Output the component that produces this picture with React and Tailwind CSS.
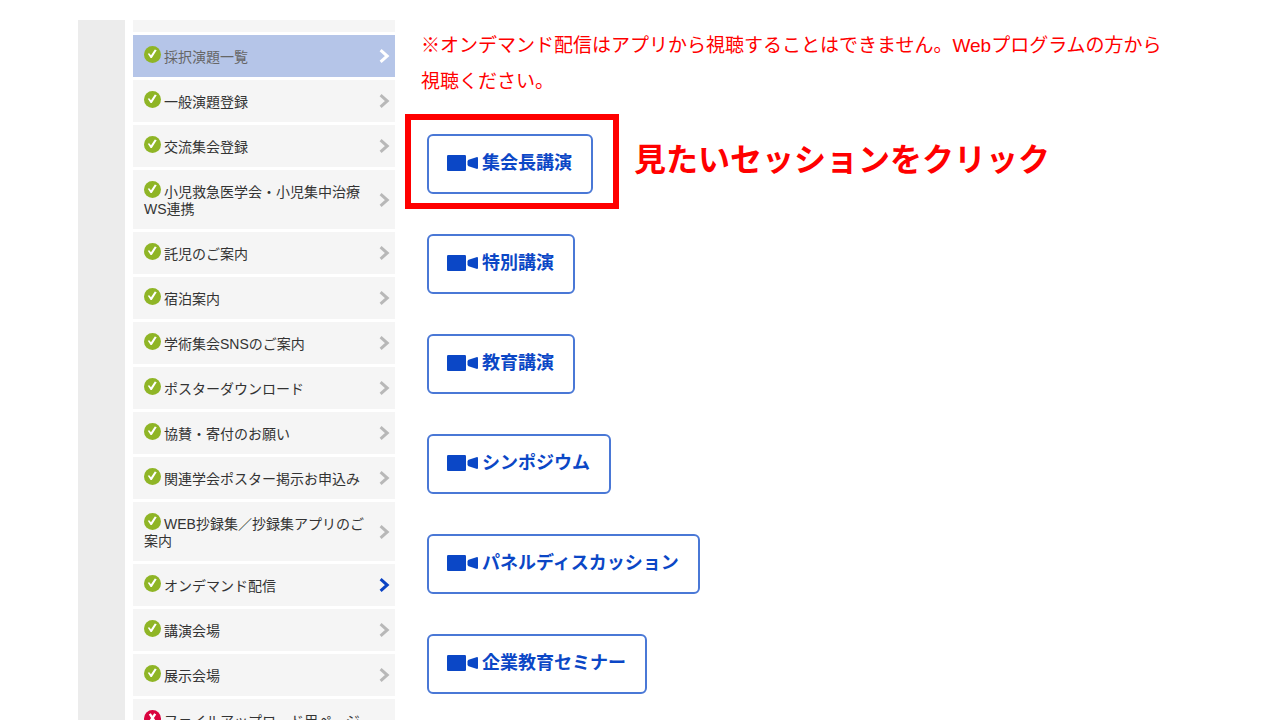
import clsx from 'clsx'

const menuItems = [
  { label: '採択演題一覧', state: 'hover' },
  { label: '一般演題登録' },
  { label: '交流集会登録' },
  { label: '小児救急医学会・小児集中治療WS連携' },
  { label: '託児のご案内' },
  { label: '宿泊案内' },
  { label: '学術集会SNSのご案内' },
  { label: 'ポスターダウンロード' },
  { label: '協賛・寄付のお願い' },
  { label: '関連学会ポスター掲示お申込み' },
  { label: 'WEB抄録集／抄録集アプリのご案内' },
  { label: 'オンデマンド配信', state: 'current' },
  { label: '講演会場' },
  { label: '展示会場' },
  { label: 'ファイルアップロード用ページ', closed: true },
]

const sessions = [
  '集会長講演',
  '特別講演',
  '教育講演',
  'シンポジウム',
  'パネルディスカッション',
  '企業教育セミナー',
]

function StatusIcon({ closed }) {
  return (
    <svg
      viewBox="0 0 17 17"
      className="-mt-1 mr-[3px] inline-block h-[17px] w-[17px] align-[-1px]"
      aria-hidden="true"
    >
      <circle cx="8.5" cy="8.5" r="8.5" fill={closed ? '#d9053f' : '#8fb526'} />
      {closed ? (
        <path
          d="M5.8 3.8 11.2 12.2M11.2 3.8 5.8 12.2"
          fill="none"
          stroke="#fff"
          strokeWidth="2.4"
        />
      ) : (
        <path
          d="M3.8 7.8 5.2 7.2 7 9.2 10.8 3.4 12.7 4.2 7.8 12 6.6 12Z"
          fill="#fff"
        />
      )}
    </svg>
  )
}

function Chevron({ state }) {
  return (
    <svg
      viewBox="0 0 11 14"
      className={clsx(
        'h-[14px] w-[11px] shrink-0',
        !state && 'text-[#b8b8b8]',
        state === 'hover' && 'text-white',
        state === 'current' && 'text-[#0b43c4]',
      )}
      aria-hidden="true"
    >
      <path
        d="M1.6 1.2 8.2 7 1.6 12.8"
        fill="none"
        stroke="currentColor"
        strokeWidth="3"
      />
    </svg>
  )
}

function VideoIcon() {
  return (
    <svg
      viewBox="0 0 32 16"
      className="h-4 w-8 shrink-0"
      fill="currentColor"
      aria-hidden="true"
    >
      <rect x="0" y="0" width="19" height="16" rx="1.2" />
      <path d="M20.5 6.4Q20.6 5.2 21.6 4.7L29.4 2.2Q31 1.8 31 3.3V12.7Q31 14.2 29.4 13.8L21.6 11.3Q20.6 10.8 20.5 9.6Z" />
    </svg>
  )
}

function MenuItem({ item }) {
  const { label, state, closed } = item
  return (
    <li>
      <a
        href="#"
        className={clsx(
          'flex items-center justify-between pr-[5px] pl-[11px]',
          state === 'hover'
            ? 'bg-[#b5c5e8] text-[#666666]'
            : 'bg-[#f5f5f5] text-[#333333]',
        )}
      >
        <span
          className={clsx(
            'w-[228px] pt-[14px] pb-[11px] text-[14px] leading-[17px]',
            closed && 'min-h-[59px]',
          )}
        >
          <StatusIcon closed={closed} />
          {label}
        </span>
        <Chevron state={state} />
      </a>
    </li>
  )
}

function SessionButton({ name }) {
  return (
    <button
      type="button"
      className="flex items-center gap-[3px] rounded-[6px] border-2 border-[#4a78d6] bg-white pt-[15px] pr-[19px] pb-[17px] pl-[18px] text-[18px] leading-6 font-bold text-[#0b47c6]"
    >
      <VideoIcon />
      {name}
    </button>
  )
}

export default function App() {
  return (
    <div className="flex h-screen overflow-hidden bg-white pt-5 pr-[110px] pl-[78px] font-['Liberation_Sans','Noto_Sans_CJK_JP',sans-serif]">
      <div className="w-[47px] shrink-0 bg-[#ececec]" />

      <nav className="ml-2 w-[262px] shrink-0">
        <div className="mb-[3px] h-3 bg-[#f5f5f5]" />
        <ul className="flex flex-col gap-[3px]">
          {menuItems.map((item) => (
            <MenuItem key={item.label} item={item} />
          ))}
        </ul>
      </nav>

      <main className="ml-[26px] min-w-0 flex-1 pt-2">
        <p className="overflow-hidden text-[19px] leading-9 whitespace-nowrap text-[#ff0000]">
          ※オンデマンド配信はアプリから視聴することはできません。Webプログラムの方から
          <br />
          視聴ください。
        </p>

        <ul className="mt-[34px] ml-[6px] flex flex-col gap-10">
          {sessions.map((name, i) => (
            <li key={name} className="flex items-center">
              <div className="relative">
                <SessionButton name={name} />
                {i === 0 && (
                  <div className="pointer-events-none absolute -top-5 -right-[26px] -bottom-[15px] -left-[22px] border-6 border-[#ff0000]" />
                )}
              </div>
              {i === 0 && (
                <strong className="-mt-2 ml-[41px] text-[32px] leading-10 font-bold whitespace-nowrap text-[#ff0000]">
                  見たいセッションをクリック
                </strong>
              )}
            </li>
          ))}
        </ul>
      </main>
    </div>
  )
}
